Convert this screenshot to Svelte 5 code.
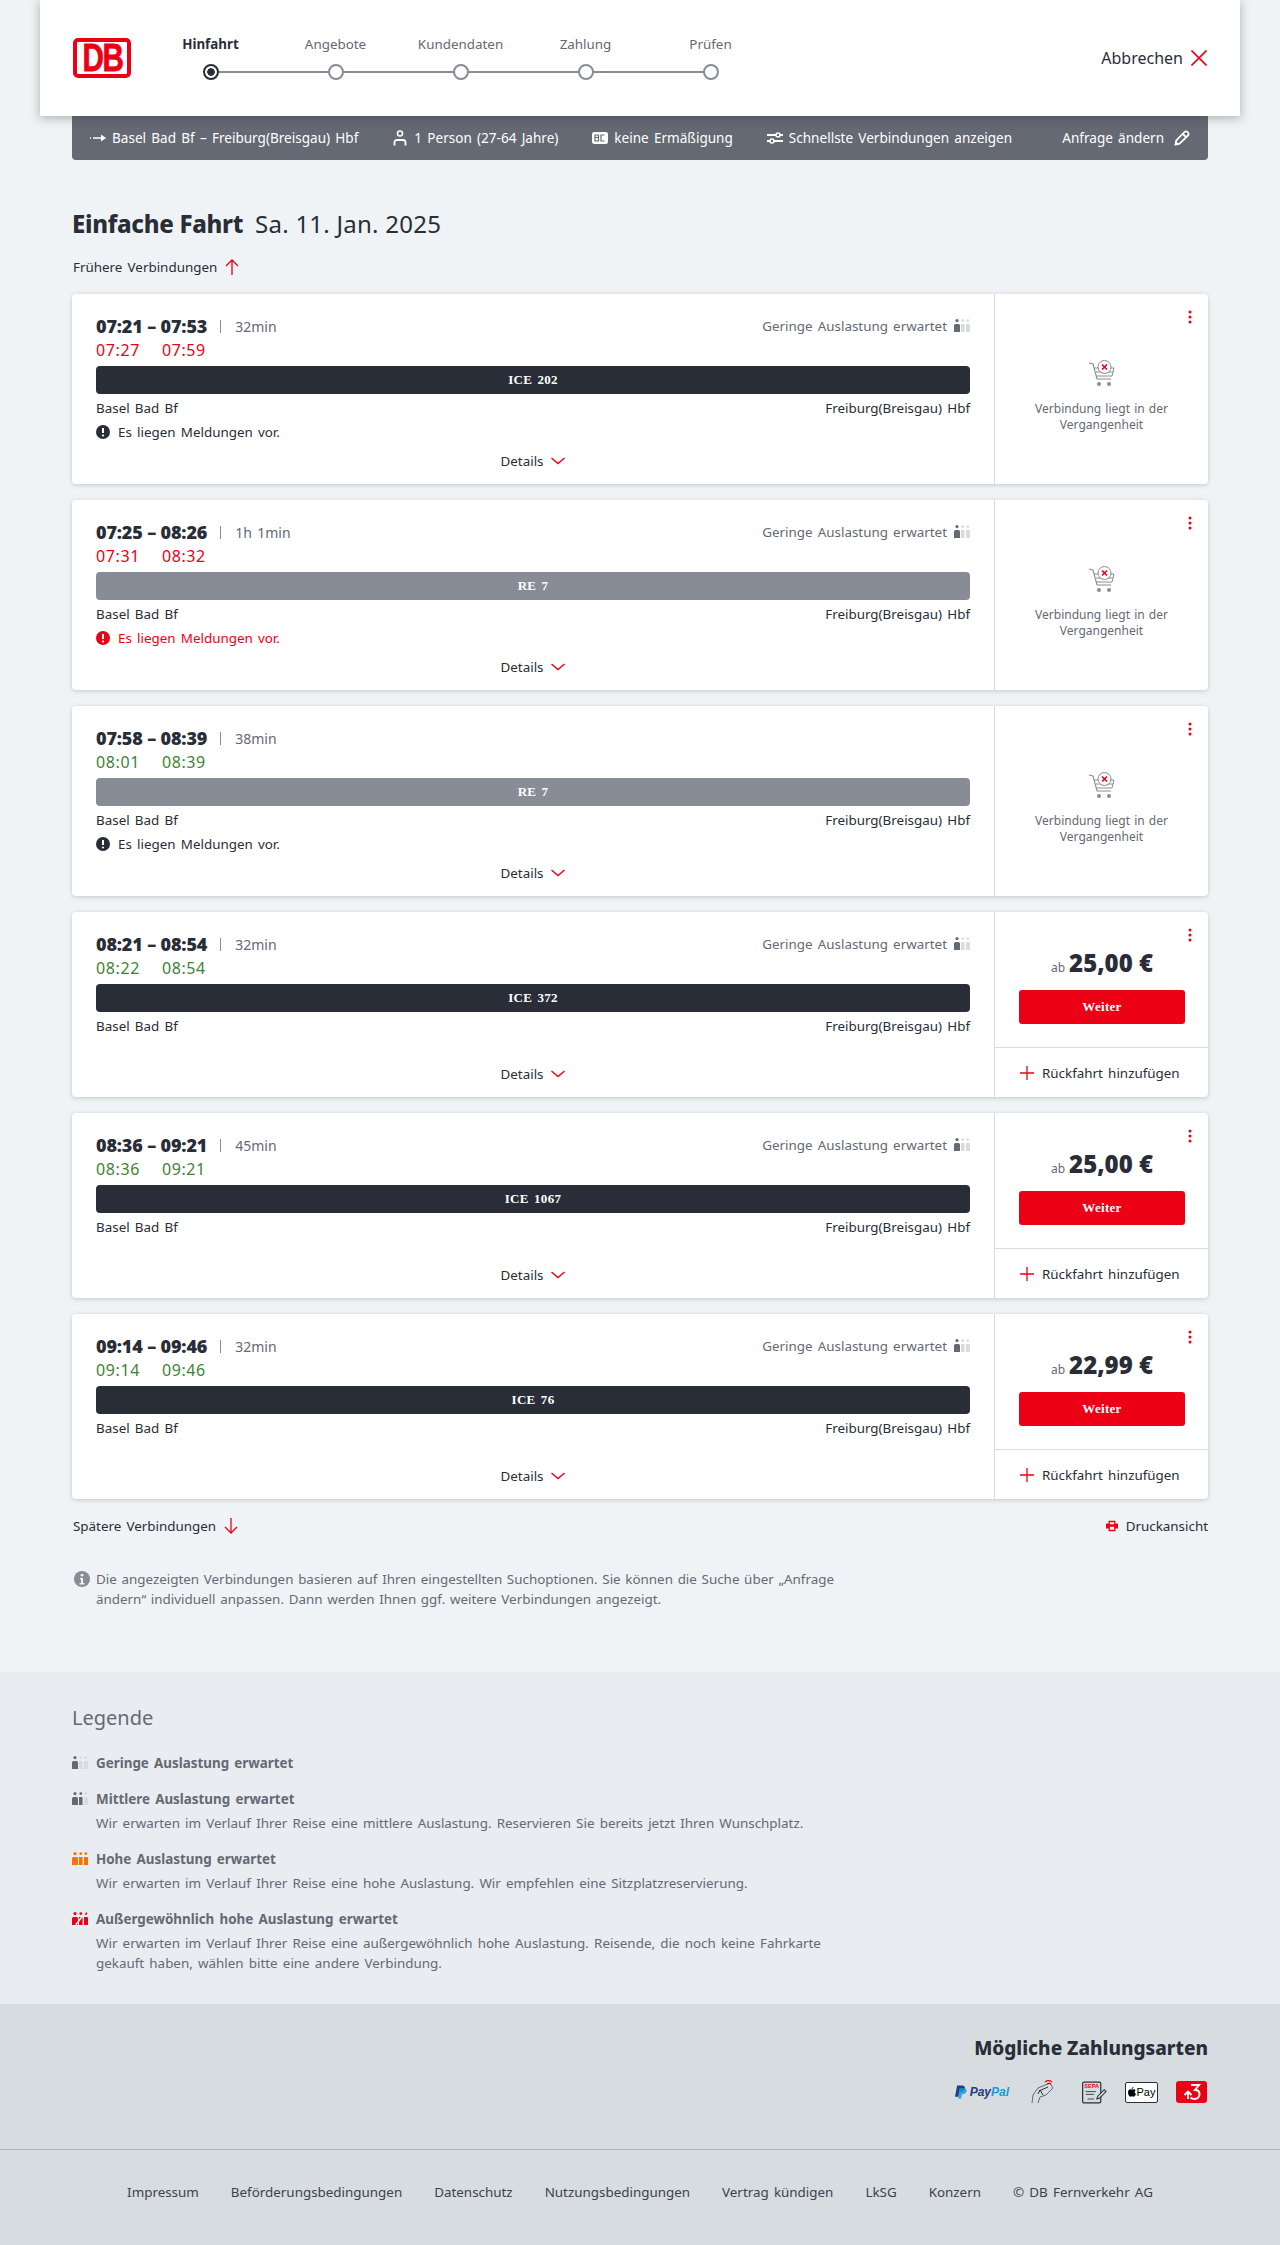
<script>
  const steps = ['Hinfahrt', 'Angebote', 'Kundendaten', 'Zahlung', 'Prüfen'];
  const connections = [
    { dep: '07:21', arr: '07:53', dur: '32min', rt: ['07:27', '07:59'], late: true, train: 'ICE 202', re: false, msg: 'dark', load: true, past: true },
    { dep: '07:25', arr: '08:26', dur: '1h 1min', rt: ['07:31', '08:32'], late: true, train: 'RE 7', re: true, msg: 'red', load: true, past: true },
    { dep: '07:58', arr: '08:39', dur: '38min', rt: ['08:01', '08:39'], late: false, train: 'RE 7', re: true, msg: 'dark', load: false, past: true },
    { dep: '08:21', arr: '08:54', dur: '32min', rt: ['08:22', '08:54'], late: false, train: 'ICE 372', re: false, msg: '', load: true, price: '25,00 €' },
    { dep: '08:36', arr: '09:21', dur: '45min', rt: ['08:36', '09:21'], late: false, train: 'ICE 1067', re: false, msg: '', load: true, price: '25,00 €' },
    { dep: '09:14', arr: '09:46', dur: '32min', rt: ['09:14', '09:46'], late: false, train: 'ICE 76', re: false, msg: '', load: true, price: '22,99 €' }
  ];
  const legend = [
    { level: 1, title: 'Geringe Auslastung erwartet', text: '' },
    { level: 2, title: 'Mittlere Auslastung erwartet', text: 'Wir erwarten im Verlauf Ihrer Reise eine mittlere Auslastung. Reservieren Sie bereits jetzt Ihren Wunschplatz.' },
    { level: 3, title: 'Hohe Auslastung erwartet', text: 'Wir erwarten im Verlauf Ihrer Reise eine hohe Auslastung. Wir empfehlen eine Sitzplatzreservierung.' },
    { level: 4, title: 'Außergewöhnlich hohe Auslastung erwartet', text: 'Wir erwarten im Verlauf Ihrer Reise eine außergewöhnlich hohe Auslastung. Reisende, die noch keine Fahrkarte gekauft haben, wählen bitte eine andere Verbindung.' }
  ];
  const links = ['Impressum', 'Beförderungsbedingungen', 'Datenschutz', 'Nutzungsbedingungen', 'Vertrag kündigen', 'LkSG', 'Konzern', '© DB Fernverkehr AG'];
  const color = (level, i) => {
    if (level === 3) return '#f67300';
    if (level === 4) return '#ec0016';
    return i < level ? '#646973' : '#d7dce1';
  };
</script>

{#snippet loadIcon(level)}
  <svg class="load" width="16" height="14" viewBox="0 0 16 14">
    <circle cx="3" cy="1.6" r="1.6" fill={color(level, 0)} />
    <path d="M0 6.5a1.5 1.5 0 0 1 1.5-1.5h3A1.5 1.5 0 0 1 6 6.5V13H0z" fill={color(level, 0)} />
    <circle cx="8.8" cy="1.6" r="1.4" fill={color(level, 1)} />
    <path d="M7 5h2.6a1 1 0 0 1 1 1v7H7z" fill={color(level, 1)} />
    <circle cx="13.8" cy="1.6" r="1.4" fill={color(level, 2)} />
    <path d="M12 5h3a1 1 0 0 1 1 1v7h-4z" fill={color(level, 2)} />
    {#if level === 4}
      <path d="M3 14L13.5 0" stroke="#e9ecf1" stroke-width="1.6" />
    {/if}
  </svg>
{/snippet}

{#snippet chevron()}
  <svg width="16" height="16" viewBox="0 0 16 16"><path d="M1.5 5l6.5 5.5L14.5 5" fill="none" stroke="#ec0016" stroke-width="1.4" /></svg>
{/snippet}

{#snippet cart()}
  <svg width="28" height="28" viewBox="0 0 28 28">
    <path d="M1 3l4 1 4 15h14" fill="none" stroke="#878c96" stroke-width="1.1" />
    <path d="M6 8h20l-2 8H8M8 12h17" fill="none" stroke="#878c96" stroke-width="1" />
    <circle cx="11" cy="24" r="2" fill="#878c96" />
    <circle cx="21" cy="24" r="2" fill="#878c96" />
    <circle cx="16.5" cy="7" r="6.5" fill="#fff" stroke="#878c96" stroke-width="1" />
    <path d="M14 4.5l5 5M19 4.5l-5 5" stroke="#ec0016" stroke-width="1.6" />
  </svg>
{/snippet}

<header class="head">
  <div class="logo"><span>DB</span></div>
  <ol class="steps">
    {#each steps as s, i}
      <li class="step" class:active={i === 0} class:last={i === steps.length - 1}>
        <span class="step-label">{s}</span>
        <span class="dot"></span>
      </li>
    {/each}
  </ol>
  <div class="cancel">
    <span>Abbrechen</span>
    <svg width="16" height="16" viewBox="0 0 16 16"><path d="M.5.5l15 15M15.500.5l-15 15" stroke="#ec0016" stroke-width="1.6" /></svg>
  </div>
</header>

<div class="bar">
  <div class="bar-item">
    <svg width="16" height="16" viewBox="0 0 16 16"><path d="M0 8h1M3 8h11" stroke="#fff" stroke-width="1.600" /><path d="M11 4.500L16 8l-5 3.500z" fill="#fff" /></svg>
    <span>Basel Bad Bf – Freiburg(Breisgau) Hbf</span>
  </div>
  <div class="bar-item">
    <svg width="16" height="16" viewBox="0 0 16 16"><circle cx="8" cy="3.500" r="2.500" fill="none" stroke="#fff" stroke-width="1.600" /><path d="M2.500 15.500v-3a2.500 2.500 0 0 1 2.500-2.500h6a2.500 2.500 0 0 1 2.500 2.500v3" fill="none" stroke="#fff" stroke-width="1.800" /></svg>
    <span>1 Person (27-64 Jahre)</span>
  </div>
  <div class="bar-item">
    <svg width="16" height="16" viewBox="0 0 16 16"><rect x=".7" y="2.700" width="14.600" height="10.600" rx="1.500" fill="#fff" stroke="#fff" stroke-width="1.400" /><path d="M3 5h3.500v2.500H3.500h3V11H3zM12.500 5h-3.500v6h3.500" stroke="#646973" stroke-width="1.200" fill="none" /></svg>
    <span>keine Ermäßigung</span>
  </div>
  <div class="bar-item">
    <svg width="16" height="16" viewBox="0 0 16 16"><path d="M0 5h16M0 11h16" stroke="#fff" stroke-width="1.800" /><circle cx="11" cy="5" r="2" fill="#646973" stroke="#fff" stroke-width="1.500" /><circle cx="5" cy="11" r="2" fill="#646973" stroke="#fff" stroke-width="1.500" /></svg>
    <span>Schnellste Verbindungen anzeigen</span>
  </div>
  <div class="bar-item change">
    <span>Anfrage ändern</span>
    <svg width="16" height="16" viewBox="0 0 16 16"><path d="M1.500 14.500l.8-4L10.500 2a2 2 0 0 1 2.900 0l.6.600a2 2 0 0 1 0 2.900L5.500 13.700zM9 4l3 3" fill="none" stroke="#fff" stroke-width="1.800" /><path d="M1 15l.8-4 3.200 3.200z" fill="#fff" /></svg>
  </div>
</div>

<main class="main">
  <h1 class="title"><strong>Einfache Fahrt</strong><span>Sa. 11. Jan. 2025</span></h1>

  <div class="pager earlier">
    <span>Frühere Verbindungen</span>
    <svg width="14" height="16" viewBox="0 0 14 16"><path d="M7 16V1M1 7l6-6 6 6" fill="none" stroke="#ec0016" stroke-width="1.300" /></svg>
  </div>

  <div class="cards">
    {#each connections as c}
      <article class="card">
        <div class="trip">
          <div class="row-top">
            <div class="times">
              <strong>{c.dep} – {c.arr}</strong>
              <i class="sep"></i>
              <span class="dur">{c.dur}</span>
            </div>
            {#if c.load}
              <div class="load-note">
                <span>Geringe Auslastung erwartet</span>
                {@render loadIcon(1)}
              </div>
            {/if}
          </div>
          <div class="rt" class:late={c.late}>
            <span>{c.rt[0]}</span><span>{c.rt[1]}</span>
          </div>
          <div class="train" class:re={c.re}>{c.train}</div>
          <div class="stations"><span>Basel Bad Bf</span><span>Freiburg(Breisgau) Hbf</span></div>
          <div class="msg" class:empty={!c.msg} class:red={c.msg === 'red'}>
            {#if c.msg}
              <svg width="14" height="14" viewBox="0 0 14 14"><circle cx="7" cy="7" r="7" fill="currentColor" /><path d="M7 3v5" stroke="#fff" stroke-width="2" /><circle cx="7" cy="10.500" r="1.100" fill="#fff" /></svg>
              <span>Es liegen Meldungen vor.</span>
            {/if}
          </div>
          <div class="details"><span>Details</span>{@render chevron()}</div>
        </div>
        <aside class="offer">
          <svg class="kebab" width="4" height="14" viewBox="0 0 4 14"><circle cx="2" cy="2" r="1.500" fill="#ec0016" /><circle cx="2" cy="7" r="1.500" fill="#ec0016" /><circle cx="2" cy="12" r="1.500" fill="#ec0016" /></svg>
          {#if c.past}
            <div class="past">
              {@render cart()}
              <p>Verbindung liegt in der Vergangenheit</p>
            </div>
          {:else}
            <div class="buy">
              <div class="price"><small>ab</small><strong>{c.price}</strong></div>
              <div class="btn">Weiter</div>
            </div>
            <div class="return">
              <svg width="14" height="14" viewBox="0 0 14 14"><path d="M7 0v14M0 7h14" stroke="#ec0016" stroke-width="1.300" /></svg>
              <span>Rückfahrt hinzufügen</span>
            </div>
          {/if}
        </aside>
      </article>
    {/each}
  </div>

  <div class="after">
    <div class="pager">
      <span>Spätere Verbindungen</span>
      <svg width="14" height="16" viewBox="0 0 14 16"><path d="M7 0v15M1 9l6 6 6-6" fill="none" stroke="#ec0016" stroke-width="1.300" /></svg>
    </div>
    <div class="pager print">
      <svg width="12" height="12" viewBox="0 0 14 14"><path d="M3 1h8v3h2a1 1 0 0 1 1 1v5h-3v3H3v-3H0V5a1 1 0 0 1 1-1h2z" fill="#ec0016" /><path d="M4.500 8h5v3.500h-5zM4.500 2.500h5V5h-5z" fill="#f0f3f5" /></svg>
      <span>Druckansicht</span>
    </div>
  </div>

  <div class="info">
    <svg width="16" height="16" viewBox="0 0 16 16"><circle cx="8" cy="8" r="8" fill="#878c96" /><circle cx="8" cy="4.200" r="1.400" fill="#f0f3f5" /><path d="M6 7h3v5h1.500v1.500h-5V12H7V8.500H6z" fill="#f0f3f5" /></svg>
    <p>Die angezeigten Verbindungen basieren auf Ihren eingestellten Suchoptionen. Sie können die Suche über „Anfrage ändern“ individuell anpassen. Dann werden Ihnen ggf. weitere Verbindungen angezeigt.</p>
  </div>
</main>

<section class="legend">
  <h2>Legende</h2>
  {#each legend as l}
    <div class="legend-item">
      <div class="legend-title">{@render loadIcon(l.level)}<strong>{l.title}</strong></div>
      {#if l.text}<p>{l.text}</p>{/if}
    </div>
  {/each}
</section>

<section class="pay">
  <h2>Mögliche Zahlungsarten</h2>
  <div class="pay-icons">
    <div class="paypal">
      <svg width="12" height="14" viewBox="0 0 14 15"><path d="M2.500 0h5.500c3 0 4 2 3.500 4-.6 2.500-2.500 3.500-5 3.500H5L4 13H0z" fill="#253b80" /><path d="M5 3h5c2.500 0 4 1.500 3.500 3.500-.5 2.500-2.500 3.500-4.500 3.500H8l-.8 5H3.800z" fill="#179bd7" opacity=".85" /></svg>
      <span class="pp1">Pay</span><span class="pp2">Pal</span>
    </div>
    <svg width="24" height="24" viewBox="0 0 24 24">
      <path d="M1 23l1-8 5-7 12-5 3 5-7 7-6 2-2 6" fill="none" stroke="#646973" stroke-width="1" />
      <path d="M8 11l9-4M7 14l2-4 3 5" fill="none" stroke="#282d37" stroke-width="1" />
      <path d="M14 2c2-1.500 5-1.500 7 0M16 4c1-.7 3-.7 4 0" fill="none" stroke="#ec0016" stroke-width="1.200" />
    </svg>
    <svg class="sepa" width="25" height="23" viewBox="0 0 27 24">
      <rect x=".7" y=".7" width="19.600" height="22.600" rx="1.500" fill="none" stroke="#282d37" stroke-width="1.300" />
      <text x="10.500" y="7.500" text-anchor="middle" font-size="6" font-weight="700" fill="#ec0016" font-family="Liberation Sans, sans-serif">SEPA</text>
      <path d="M4 11h11M4 14h9M6 19h7" stroke="#282d37" stroke-width=".9" />
      <path d="M16 19l1-3 7-7 2 2-7 7z" fill="#d7dce1" stroke="#282d37" stroke-width="1.100" />
    </svg>
    <div class="apple">
      <svg width="8" height="10" viewBox="0 0 8 10"><path d="M5.500 0c0 1.200-.8 2-1.800 2 0-1 .8-1.900 1.800-2zM4 2.600c.6 0 1.100-.4 1.900-.4.700 0 1.400.4 1.800 1-1.500.9-1.200 3 .3 3.600-.4 1.200-1.300 2.900-2.200 2.900-.7 0-1-.4-1.800-.4s-1.100.4-1.800.4C1.200 9.700 0 7.500 0 5.600 0 3.500 1.200 2.300 2.400 2.300c.7 0 1.200.3 1.600.3z" fill="#000" /></svg>
      <span>Pay</span>
    </div>
    <div class="bonus">
      <svg width="20" height="18" viewBox="0 0 20 18"><path d="M9 2h8l-4 5c2.800 0 4.500 1.300 4.500 4s-2 5-5 5c-1.800 0-3-.4-4-1.500" fill="none" stroke="#fff" stroke-width="2" /><path d="M6 16V9M2.500 12L6 8.500 9.500 12" fill="none" stroke="#fff" stroke-width="1.800" /></svg>
    </div>
  </div>
</section>

<footer class="foot">
  {#each links as link}<span>{link}</span>{/each}
</footer>

<style>
  :global(body) {
    margin: 0;
    background: #f0f3f5;
    color: #282d37;
    font-family: "Noto Sans", "Open Sans", sans-serif;
    font-size: 13.4px;
    word-spacing: 1.7px;
  }
  p, h1, h2, ol { margin: 0; padding: 0; }

  .head {
    position: relative;
    z-index: 2;
    margin: 0 40px;
    height: 116px;
    box-sizing: border-box;
    padding: 0 33px;
    background: #fff;
    display: flex;
    align-items: center;
    box-shadow: 0 2px 10px rgba(40, 45, 55, .35);
  }
  .logo {
    width: 58px;
    height: 40px;
    box-sizing: border-box;
    border: 4px solid #ec0016;
    border-radius: 5px;
    background: #fff;
    display: flex;
    align-items: center;
    justify-content: center;
    flex: none;
    overflow: hidden;
  }
  .logo span {
    color: #ec0016;
    font: 700 38px/32px "Liberation Sans", sans-serif;
    letter-spacing: -2px;
    transform: scaleX(.78);
    -webkit-text-stroke: .8px #ec0016;
  }
  .steps {
    list-style: none;
    display: flex;
    margin-left: 17px;
    align-self: flex-start;
    margin-top: 34px;
  }
  .step {
    position: relative;
    width: 125px;
    display: flex;
    flex-direction: column;
    align-items: center;
    gap: 10px;
    color: #646973;
    line-height: 20px;
  }
  .step.active { color: #282d37; font-weight: 700; }
  .step:not(.last)::after {
    content: '';
    position: absolute;
    left: 50%;
    width: 125px;
    bottom: 7px;
    height: 2px;
    background: #878c96;
  }
  .dot {
    position: relative;
    z-index: 1;
    box-sizing: border-box;
    width: 16px;
    height: 16px;
    border: 2px solid #878c96;
    border-radius: 50%;
    background: #fff;
  }
  .active .dot {
    border-color: #282d37;
    background: radial-gradient(circle, #282d37 0 3.500px, #fff 4px);
  }
  .cancel {
    margin-left: auto;
    display: flex;
    align-items: center;
    gap: 8px;
    font-size: 16px;
  }

  .bar {
    position: relative;
    margin: 0 72px;
    height: 44px;
    box-sizing: border-box;
    padding: 0 18px;
    background: #646973;
    border-radius: 0 0 4px 4px;
    display: flex;
    align-items: center;
    gap: 34px;
    color: #fff;
    font-size: 13.55px;
  }
  .bar-item { display: flex; align-items: center; gap: 6px; }
  .change { margin-left: auto; gap: 10px; }

  .main { padding: 49px 72px 63px; }
  .title {
    display: flex;
    align-items: center;
    gap: 12px;
    height: 30px;
    font-weight: 400;
    font-size: 24px;
    line-height: 30px;
    word-spacing: 0;
  }
  .title strong { font-weight: 800; letter-spacing: -.3px; }
  .title span { letter-spacing: .25px; }
  .pager {
    display: flex;
    align-items: center;
    gap: 8px;
    height: 20px;
    padding-left: 1px;
  }
  .earlier { margin-top: 18px; }
  .cards {
    margin-top: 17px;
    display: flex;
    flex-direction: column;
    gap: 16px;
  }
  .card {
    display: flex;
    background: #fff;
    border-radius: 4px;
    box-shadow: 0 1px 4px rgba(40, 45, 55, .22);
  }
  .trip {
    box-sizing: border-box;
    flex: 1;
    min-width: 0;
    padding: 20px 24px 6px;
  }
  .row-top {
    display: flex;
    justify-content: space-between;
    align-items: center;
    height: 24px;
  }
  .times { display: flex; align-items: center; }
  .times strong {
    font-size: 18px;
    font-weight: 900;
    letter-spacing: -.15px;
    word-spacing: 0;
  }
  .sep {
    width: 1px;
    height: 13px;
    background: #878c96;
    margin: 0 14px 0 13px;
  }
  .dur { color: #646973; font-size: 14px; }
  .load-note {
    display: flex;
    align-items: center;
    gap: 7px;
    color: #646973;
  }
  .load { flex: none; display: block; }
  .rt {
    display: flex;
    gap: 22px;
    height: 24px;
    line-height: 24px;
    font-size: 16px;
    letter-spacing: .6px;
    color: #408335;
  }
  .rt.late { color: #ec0016; }
  .train {
    margin-top: 4px;
    height: 28px;
    border-radius: 4px;
    background: #282d37;
    color: #fff;
    display: flex;
    align-items: center;
    justify-content: center;
    font: 700 13px "Liberation Serif", serif;
    letter-spacing: .3px;
  }
  .train.re { background: #878c96; }
  .stations {
    margin-top: 4px;
    height: 20px;
    line-height: 20px;
    display: flex;
    justify-content: space-between;
  }
  .msg {
    margin-top: 2px;
    height: 24px;
    display: flex;
    align-items: center;
    gap: 8px;
  }
  .msg.empty { height: 19px; }
  .msg.red { color: #ec0016; }
  .details {
    height: 34px;
    display: flex;
    align-items: center;
    justify-content: center;
    gap: 6px;
  }

  .offer {
    position: relative;
    flex: none;
    box-sizing: border-box;
    width: 214px;
    border-left: 1px solid #d7dce1;
    display: flex;
    flex-direction: column;
  }
  .kebab { position: absolute; top: 16px; right: 16px; }
  .past {
    padding-top: 66px;
    display: flex;
    flex-direction: column;
    align-items: center;
    gap: 13px;
    text-align: center;
  }
  .past p {
    width: 160px;
    color: #646973;
    font-size: 12px;
    line-height: 16px;
    word-spacing: 1px;
  }
  .buy {
    height: 136px;
    box-sizing: border-box;
    padding: 33px 23px 0 24px;
    border-bottom: 1px solid #d7dce1;
  }
  .price {
    height: 36px;
    display: flex;
    align-items: baseline;
    justify-content: center;
    gap: 4px;
    line-height: 36px;
  }
  .price small { color: #646973; font-size: 12px; }
  .price strong { font-size: 24px; font-weight: 900; word-spacing: 0; }
  .btn {
    margin-top: 9px;
    height: 34px;
    border-radius: 3px;
    background: #ec0016;
    color: #fff;
    display: flex;
    align-items: center;
    justify-content: center;
    font: 700 13px "Liberation Serif", serif;
    letter-spacing: .3px;
  }
  .return {
    flex: 1;
    display: flex;
    align-items: center;
    gap: 8px;
    padding-left: 25px;
  }

  .after {
    margin-top: 17px;
    display: flex;
    justify-content: space-between;
  }
  .info {
    margin-top: 33px;
    padding-left: 2px;
    display: flex;
    gap: 6px;
    color: #646973;
  }
  .info svg { flex: none; margin-top: 2px; }
  .info p { width: 760px; line-height: 20px; word-spacing: 1.2px; }

  .legend {
    padding: 34px 72px 31px;
    background: #e9ecf1;
    color: #646973;
  }
  .legend h2 {
    font-weight: 400;
    font-size: 20px;
    line-height: 24px;
    margin-bottom: 23px;
    word-spacing: 0;
  }
  .legend-item + .legend-item { margin-top: 16px; }
  .legend-title {
    display: flex;
    align-items: center;
    gap: 8px;
    height: 20px;
    line-height: 20px;
  }
  .legend-title strong { font-weight: 700; }
  .legend-item p {
    margin: 4px 0 0 24px;
    width: 760px;
    line-height: 20px;
  }

  .pay {
    padding: 30px 72px 42px;
    background: #d7dce1;
    border-bottom: 1px solid #afb4bb;
  }
  .pay h2 {
    text-align: right;
    font-size: 19px;
    font-weight: 800;
    line-height: 28px;
    word-spacing: 0;
  }
  .pay-icons {
    margin-top: 15px;
    height: 30px;
    display: flex;
    align-items: center;
    justify-content: flex-end;
    gap: 22px;
    padding-right: 1px;
  }
  .paypal {
    display: flex;
    align-items: center;
    font: italic 700 12px "Liberation Sans", sans-serif;
  }
  .paypal svg { margin-right: 3px; }
  .pp1 { color: #253b80; }
  .pp2 { color: #179bd7; }
  .sepa { margin-left: 5px; margin-right: -4px; }
  .apple {
    box-sizing: border-box;
    width: 33px;
    height: 21px;
    margin-right: -4px;
    border: 1px solid #282d37;
    border-radius: 2px;
    background: #fff;
    display: flex;
    align-items: center;
    justify-content: center;
    gap: 1px;
    color: #000;
    font: 500 11px "Liberation Sans", sans-serif;
  }
  .bonus {
    width: 31px;
    height: 22px;
    border-radius: 3px;
    background: #ec0016;
    display: flex;
    align-items: center;
    justify-content: center;
  }

  .foot {
    height: 96px;
    box-sizing: border-box;
    padding-top: 32px;
    background: #d7dce1;
    display: flex;
    justify-content: center;
    gap: 32px;
    line-height: 20px;
    color: #3c414b;
  }
</style>
